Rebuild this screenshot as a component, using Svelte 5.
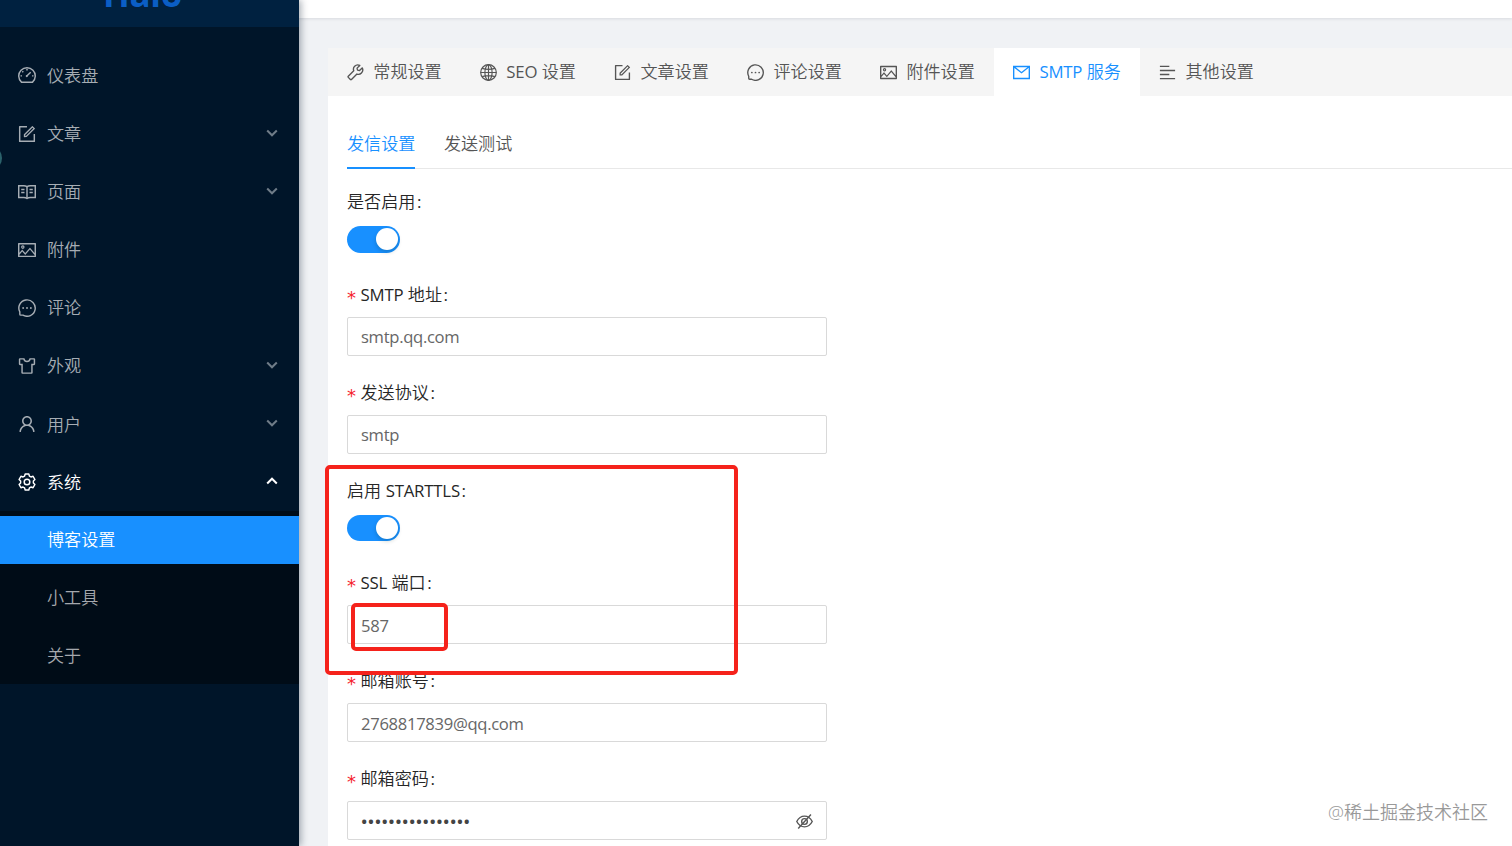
<script lang="ts">
	type MenuItem = { icon: string; label: string; expandable?: boolean; open?: boolean };
	type Field = {
		label: string;
		kind: 'switch' | 'text' | 'password';
		value?: string;
	};

	const menu: MenuItem[] = [
		{ icon: 'dashboard', label: '仪表盘' },
		{ icon: 'form', label: '文章', expandable: true },
		{ icon: 'read', label: '页面', expandable: true },
		{ icon: 'picture', label: '附件' },
		{ icon: 'message', label: '评论' },
		{ icon: 'skin', label: '外观', expandable: true },
		{ icon: 'user', label: '用户', expandable: true },
		{ icon: 'setting', label: '系统', expandable: true, open: true }
	];
	const submenu = ['博客设置', '小工具', '关于'];

	const tabs = [
		{ icon: 'tool', label: '常规设置' },
		{ icon: 'global', label: 'SEO 设置' },
		{ icon: 'form', label: '文章设置' },
		{ icon: 'message', label: '评论设置' },
		{ icon: 'picture', label: '附件设置' },
		{ icon: 'mail', label: 'SMTP 服务' },
		{ icon: 'align', label: '其他设置' }
	];
	const subTabs = ['发信设置', '发送测试'];

	const fields: Field[] = [
		{ label: '是否启用', kind: 'switch' },
		{ label: 'SMTP 地址', kind: 'text', value: 'smtp.qq.com' },
		{ label: '发送协议', kind: 'text', value: 'smtp' },
		{ label: '启用 STARTTLS', kind: 'switch' },
		{ label: 'SSL 端口', kind: 'text', value: '587' },
		{ label: '邮箱账号', kind: 'text', value: '2768817839@qq.com' },
		{ label: '邮箱密码', kind: 'password', value: 'abcdefghijklmnop' }
	];

	let activeSub = $state('博客设置');
	let activeTab = $state('SMTP 服务');
	let activeSubTab = $state('发信设置');

	// Latin words get their own weight and spacing next to the Chinese text
	const split = (text: string) => text.split(/([A-Z]+)/).filter(Boolean);
	const isLatin = (part: string) => /^[A-Z]+$/.test(part);
</script>

{#snippet mixed(text: string)}
	<span class="mixed">{#each split(text) as part}{#if isLatin(part)}<span class="latin">{part}</span>{:else}{part}{/if}{/each}</span>
{/snippet}

{#snippet icon(name: string)}
	<svg class="icon" viewBox="64 64 896 896" aria-hidden="true">
		{#if name === 'form'}
			<path d="M904 512h-56c-4.4 0-8 3.6-8 8v320H184V184h320c4.4 0 8-3.6 8-8v-56c0-4.4-3.6-8-8-8H144c-17.7 0-32 14.3-32 32v736c0 17.7 14.3 32 32 32h736c17.7 0 32-14.3 32-32V520c0-4.4-3.6-8-8-8z" />
			<path d="M355.9 534.9L354 653.8c-.1 8.9 7.1 16.2 16 16.2h.4l118-2.9c2-.1 4-.9 5.4-2.3l415.9-415c3.1-3.1 3.1-8.2 0-11.3L785.4 114.3c-1.6-1.6-3.6-2.3-5.7-2.3s-4.1.8-5.7 2.3l-415.8 415a8.3 8.3 0 0 0-2.3 5.6zm63.5 23.6L779.7 199l45.2 45.1-360.5 359.7-45.7 1.1.7-46.4z" />
		{:else if name === 'picture'}
			<path d="M928 160H96c-17.7 0-32 14.3-32 32v640c0 17.7 14.3 32 32 32h832c17.7 0 32-14.3 32-32V192c0-17.7-14.3-32-32-32zm-40 632H136v-39.9l138.5-164.3 150.1 178L658.1 489 888 761.6V792zm0-129.8L664.2 396.8c-3.2-3.8-9-3.8-12.2 0L424.6 666.4l-144-170.7c-3.2-3.8-9-3.8-12.2 0L136 652.7V232h752v430.2zM304 456a88 88 0 1 0 0-176 88 88 0 0 0 0 176zm0-116c15.5 0 28 12.5 28 28s-12.5 28-28 28-28-12.5-28-28 12.5-28 28-28z" />
		{:else if name === 'user'}
			<path d="M858.5 763.6a374 374 0 0 0-80.6-119.5 375.63 375.63 0 0 0-119.5-80.6c-.4-.2-.8-.3-1.2-.5C719.5 518 760 444.7 760 362c0-137-111-248-248-248S264 225 264 362c0 82.7 40.5 156 102.8 201.1-.4.2-.8.3-1.2.5-44.8 18.9-85 46-119.5 80.6a375.63 375.63 0 0 0-80.6 119.5A371.7 371.7 0 0 0 136 901.8a8 8 0 0 0 8 8.2h60c4.4 0 7.9-3.5 8-7.8 2-77.2 33-149.5 87.8-204.3 56.7-56.7 132-87.9 212.2-87.9s155.5 31.2 212.2 87.9C779 752.7 810 825 812 902.2c.1 4.4 3.6 7.8 8 7.8h60a8 8 0 0 0 8-8.2c-1-47.8-10.9-94.3-29.5-138.2zM512 534c-45.9 0-89.1-17.9-121.6-50.4S340 407.9 340 362c0-45.9 17.9-89.1 50.4-121.6S466.1 190 512 190s89.1 17.9 121.6 50.4S684 316.1 684 362c0 45.9-17.9 89.1-50.4 121.6S557.9 534 512 534z" />
		{:else if name === 'message'}
			<g class="line">
				<path d="M303 872A412 412 0 1 0 148 711L148 824a48 48 0 0 0 48 48z" transform="translate(8 4) scale(.99)" />
			</g>
			<circle cx="320" cy="512" r="46" /><circle cx="512" cy="512" r="46" /><circle cx="704" cy="512" r="46" />
		{:else if name === 'dashboard'}
			<g class="line">
				<path d="M236 868A412 412 0 1 1 788 868z" stroke-linejoin="round" />
				<path d="M512 216v72M190 556h72M762 556h72M280 330l46 46M500 566l196-196" />
			</g>
			<circle cx="500" cy="566" r="52" />
		{:else if name === 'read'}
			<g class="line">
				<path d="M512 244Q440 196 356 196H100v592h256q84 0 156 48 72-48 156-48h256V196H668q-84 0-156 48z" />
				<path d="M512 244v590M224 390h164M224 540h164M636 390h164M636 540h164" />
			</g>
		{:else if name === 'skin'}
			<path class="line" d="M358 158H162a20 20 0 0 0-20 20v236a20 20 0 0 0 20 20h104v412a20 20 0 0 0 20 20h452a20 20 0 0 0 20-20V434h104a20 20 0 0 0 20-20V178a20 20 0 0 0-20-20H666c-16 78-78 130-154 130s-138-52-154-130z" />
		{:else if name === 'setting'}
			<g class="line" transform="translate(512 512)" stroke-linejoin="round">
				<path d="M-90-400H90L120-297 197-252 302-284 394-124 317-45V45L394 124 302 284 197 252 120 297 90 400H-90L-120 297-197 252-302 284-394 124-317 45V-45L-394-124-302-284-197-252-120-297z" />
				<circle r="140" />
			</g>
		{:else if name === 'tool'}
			<path class="line" stroke-linejoin="round" d="M866 270L724 412 618 388 594 282 738 138C650 96 540 112 468 184 404 248 388 342 420 424L132 712a40 40 0 0 0 0 56L244 880a40 40 0 0 0 56 0L588 592C670 622 762 604 826 540 898 468 912 356 866 270z" />
		{:else if name === 'global'}
			<g class="line thin">
				<circle cx="512" cy="512" r="412" />
				<ellipse cx="512" cy="512" rx="190" ry="412" />
				<path d="M512 100v824M100 512h824M176 296Q512 390 848 296M176 728Q512 634 848 728" />
			</g>
		{:else if name === 'mail'}
			<path class="line" d="M100 196h824v632H100zM112 212l400 310 400-310" />
		{:else if name === 'align'}
			<path class="line" d="M112 192h496M112 406h800M112 620h496M112 834h800" />
		{:else if name === 'eye-invisible'}
			<g class="line">
				<path d="M104 512Q250 232 512 232T920 512Q774 792 512 792T104 512z" />
				<circle cx="512" cy="512" r="150" />
				<path d="M180 880L852 140" />
			</g>
		{/if}
	</svg>
{/snippet}

<div class="layout">
	<aside class="sider">
		<div class="logo"><span>Halo</span></div>
		<nav class="menu">
			{#each menu as item}
				<div class="menu-item" class:open={item.open}>
					{@render icon(item.icon)}
					<span>{item.label}</span>
					{#if item.expandable}
						<svg class="arrow" viewBox="0 0 12 8" aria-hidden="true">
							<path d={item.open ? 'M1.2 6.5L6 1.7l4.8 4.8' : 'M1.2 1.5L6 6.3l4.8-4.8'} />
						</svg>
					{/if}
				</div>
			{/each}
			<div class="submenu">
				{#each submenu as label}
					<button class="submenu-item" class:active={label === activeSub} onclick={() => (activeSub = label)}>
						{label}
					</button>
				{/each}
			</div>
		</nav>
		<div class="drawer-handle"></div>
	</aside>

	<div class="content">
		<header class="topbar"></header>
		<main class="card">
			<div class="tabs">
				{#each tabs as tab}
					<button class="tab" class:active={tab.label === activeTab} onclick={() => (activeTab = tab.label)}>
						{@render icon(tab.icon)}
						{@render mixed(tab.label)}
					</button>
				{/each}
			</div>
			<div class="sub-tabs">
				{#each subTabs as label}
					<button class="sub-tab" class:active={label === activeSubTab} onclick={() => (activeSubTab = label)}>
						{label}
					</button>
				{/each}
			</div>
			<form class="form">
				{#each fields as field}
					<div class="field" class:compact={field.kind === 'switch'}>
						<div class="label">
							{#if field.kind !== 'switch'}<i>*</i>{/if}{@render mixed(field.label)}<b>:</b>
						</div>
						{#if field.kind === 'switch'}
							<div class="switch" role="switch" aria-checked="true" tabindex="0"></div>
						{:else}
							<div class="input">
								<input type={field.kind} value={field.value} aria-label={field.label} />
								{#if field.kind === 'password'}{@render icon('eye-invisible')}{/if}
							</div>
						{/if}
					</div>
				{/each}
			</form>
		</main>
	</div>

	<div class="mark mark-section"></div>
	<div class="mark mark-port"></div>
	<div class="watermark">@稀土掘金技术社区</div>
</div>

<style>
	:global(body) {
		margin: 0;
		overflow: hidden;
	}

	.layout {
		position: relative;
		display: flex;
		width: 1512px;
		height: 846px;
		overflow: hidden;
		background: #f0f2f5;
		color: #555;
		font: 17.1px 'Open Sans', 'Noto Sans CJK SC', sans-serif;
		font-weight: 350;
	}

	button {
		margin: 0;
		padding: 0;
		border: 0;
		background: none;
		color: inherit;
		font: inherit;
		white-space: nowrap;
	}

	.latin {
		font-size: 16.8px;
		font-weight: 400;
		letter-spacing: -0.2px;
	}

	.icon {
		flex: none;
		width: 17px;
		height: 17px;
		fill: currentColor;
	}

	.line {
		fill: none;
		stroke: currentColor;
		stroke-width: 72;
	}

	.line.thin {
		stroke-width: 62;
	}

	.sider {
		position: relative;
		z-index: 1;
		flex: none;
		width: 299px;
		background: #001529;
		box-shadow: 2px 0 7px rgba(0, 21, 41, 0.35);
	}

	.logo {
		display: flex;
		align-items: flex-end;
		height: 27px;
		overflow: hidden;
		background: #002140;
	}

	.logo span {
		margin: 0 0 8px 103px;
		color: #0b5ec5;
		font-size: 35px;
		font-weight: 700;
		letter-spacing: -0.3px;
		line-height: 50px;
	}

	.menu {
		padding-top: 19.4px;
	}

	.menu-item {
		display: flex;
		align-items: center;
		gap: 12px;
		height: 58.1px;
		padding: 0 21px 0 18px;
		color: #a6adb4;
	}

	.menu-item .icon {
		width: 18px;
		height: 18px;
	}

	.menu-item.open {
		color: #fff;
	}

	.menu-item span {
		flex: 1;
		margin: -2px 0 0 -1px;
	}

	.arrow {
		width: 12px;
		height: 8px;
		margin-top: -2px;
		fill: none;
		stroke: #6f7c88;
		stroke-width: 2;
	}

	.open .arrow {
		stroke: #fff;
	}

	.submenu {
		display: flex;
		flex-direction: column;
		gap: 9.7px;
		padding: 4.4px 0;
		background: #000c17;
	}

	.submenu-item {
		height: 48.4px;
		padding: 0 0 2px 47px;
		color: #a5a8ad;
		text-align: left;
	}

	.submenu-item.active {
		background: #1890ff;
		color: #fff;
	}

	.drawer-handle {
		position: absolute;
		top: 146px;
		left: -22px;
		width: 24px;
		height: 24px;
		border-radius: 50%;
		background: #2b626b;
	}

	.content {
		flex: 1;
		min-width: 0;
	}

	.topbar {
		height: 18px;
		margin-bottom: 30px;
		background: #fff;
		box-shadow: 0 1px 3px rgba(0, 21, 41, 0.1);
	}

	.card {
		height: 798px;
		margin-left: 29px;
		background: #fff;
	}

	.tabs {
		display: flex;
		height: 48px;
		background: #f5f5f5;
	}

	.tab {
		display: flex;
		align-items: center;
		gap: 9px;
		padding: 0 19.3px;
	}

	.tab .mixed {
		margin-top: -3px;
	}

	.tab.active {
		background: #fff;
		color: #1890ff;
	}

	.sub-tabs {
		display: flex;
		gap: 28.5px;
		height: 48px;
		margin-left: 19px;
		padding-top: 24px;
		border-bottom: 1px solid #e8e8e8;
	}

	.sub-tab {
		height: 49px;
		padding-bottom: 2px;
		border-bottom: 2px solid transparent;
	}

	.sub-tab.active {
		border-bottom-color: #1890ff;
		color: #1890ff;
	}

	.form {
		width: 480px;
		margin: 21px 0 0 19px;
	}

	.field {
		height: 98px;
	}

	.field.compact {
		height: 92.5px;
	}

	.label {
		display: flex;
		align-items: center;
		height: 24px;
		color: #262626;
		line-height: 24px;
	}

	.label i {
		width: 13.5px;
		color: #f5222d;
		font: 18px/24px 'DejaVu Sans', sans-serif;
		transform: translateY(3px);
	}

	.label b {
		margin-left: 1.5px;
		font-weight: 400;
	}

	.switch {
		width: 53px;
		height: 26.5px;
		margin-top: 12px;
		border-radius: 14px;
		background: #1890ff;
	}

	.switch::after {
		display: block;
		width: 22px;
		height: 22px;
		margin-left: 29px;
		border-radius: 50%;
		background: #fff;
		box-shadow: 0 2px 4px rgba(0, 35, 11, 0.2);
		content: '';
		transform: translateY(2px);
	}

	.input {
		display: flex;
		align-items: center;
		box-sizing: border-box;
		height: 39px;
		margin-top: 10px;
		padding: 1px 13px 0;
		border: 1px solid #d9d9d9;
		border-radius: 2px;
	}

	.input input {
		flex: 1;
		min-width: 0;
		padding: 0;
		border: 0;
		outline: 0;
		background: none;
		color: #666;
		font: inherit;
		font-size: 16.6px;
		font-weight: 400;
		letter-spacing: -0.3px;
	}

	.input input[type='password'] {
		padding-top: 1px;
		color: #444;
		font-size: 17px;
		font-weight: 600;
		letter-spacing: 0.45px;
	}

	/* Red frames that point out the STARTTLS section and the port */
	.mark {
		position: absolute;
		z-index: 2;
		box-sizing: border-box;
		border: 4px solid #f5221b;
		border-radius: 5px;
	}

	.mark-section {
		top: 465px;
		left: 325px;
		width: 413px;
		height: 210px;
	}

	.mark-port {
		top: 603px;
		left: 351px;
		width: 97px;
		height: 48px;
	}

	.watermark {
		position: absolute;
		right: 24px;
		bottom: 22px;
		color: #999;
		font-size: 18px;
	}
</style>
